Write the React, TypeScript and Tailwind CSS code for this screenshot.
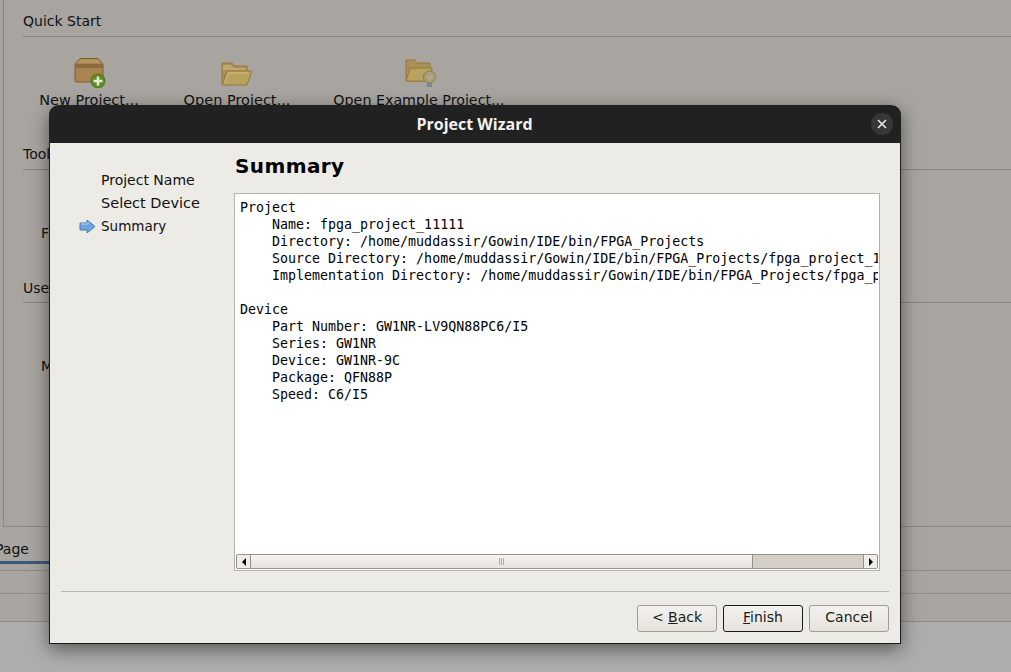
import { ReactNode } from "react";

function NewProjectIcon() {
  return (
    <svg className="mb-[4px] ml-[3px]" width="34" height="32" viewBox="0 0 34 32">
      <path d="M1 8 L6 2.5 H24 L29 8 V25 Q29 26 28 26 H2 Q1 26 1 25 Z" fill="#a98450" stroke="#7d5f35" />
      <rect x="1.5" y="8" width="27" height="4" fill="#8a6a3e" />
      <path d="M6 3.5 H24 L27 7 H3 Z" fill="#b8945f" />
      <circle cx="24" cy="25" r="7" fill="#5d8e1f" stroke="#4a7416" />
      <path d="M24 20.5 V29.5 M19.5 25 H28.5" stroke="#e6e6dc" strokeWidth="2.6" />
    </svg>
  );
}

function FolderIcon() {
  return (
    <svg className="mb-[5px]" width="32" height="26" viewBox="0 0 32 26">
      <path d="M1 23 V2 H11 L13 5 H26 V23 Z" fill="#a8925a" stroke="#9a7436" />
      <path d="M2 4 H10 L12 7 H25 V9 H2 Z" fill="#bfa76d" />
      <path d="M1 24 L6 10 H31 L26 24 Z" fill="#b8a25f" stroke="#9a7436" />
      <path d="M4 22 L7.5 12 H27" fill="none" stroke="#cdbb80" />
    </svg>
  );
}

function ExampleIcon() {
  return (
    <svg className="mb-[3px] ml-[4px]" width="32" height="30" viewBox="0 0 32 30">
      <path d="M1 22 V1 H10 L12 4 H25 V22 Z" fill="#a8925a" stroke="#9a7436" />
      <path d="M1 22 L5 9 H27 L26 22 Z" fill="#b8a25f" stroke="#9a7436" />
      <circle cx="24.5" cy="18" r="6" fill="#a99f80" stroke="#8e7a45" />
      <path d="M22 17 L24.5 20 L27 17" fill="none" stroke="#c9c2a8" />
      <rect x="22" y="24" width="5" height="4" fill="#7d8688" />
    </svg>
  );
}

function Launch({ icon, label, w, size }: { icon: ReactNode; label: string; w: string; size: string }) {
  return (
    <div className={`flex flex-col items-center ${w}`}>
      <div className="h-[38px] flex items-end">{icon}</div>
      <span className={`leading-[17px] whitespace-nowrap ${size}`}>{label}</span>
    </div>
  );
}

function DialogButton({ children, isDefault }: { children: ReactNode; isDefault?: boolean }) {
  return (
    <button
      className={`w-[80px] h-[27px] pb-[2px] rounded-[3px] border bg-gradient-to-b from-[#f3f1ed] to-[#e6e3dd] text-[#1c1c1c] text-[14px] ${
        isDefault ? "border-[#1a1a1a]" : "border-[#a09c95]"
      }`}
    >
      {children}
    </button>
  );
}

const summary = `Project
    Name: fpga_project_11111
    Directory: /home/muddassir/Gowin/IDE/bin/FPGA_Projects
    Source Directory: /home/muddassir/Gowin/IDE/bin/FPGA_Projects/fpga_project_11111/src
    Implementation Directory: /home/muddassir/Gowin/IDE/bin/FPGA_Projects/fpga_project_11111/impl

Device
    Part Number: GW1NR-LV9QN88PC6/I5
    Series: GW1NR
    Device: GW1NR-9C
    Package: QFN88P
    Speed: C6/I5`;

export default function App() {
  return (
    <div className="relative w-[1011px] h-[672px] overflow-hidden bg-[#adadad] font-['DejaVu_Sans',sans-serif] text-[14px] text-[#111]">
      {/* page behind the dialog */}
      <div className="h-[622px] bg-[#a8a5a1] border-b border-[#8b8985] flex flex-col">
        <div className="h-[527px] shrink-0 ml-[3px] border-l border-b border-[#8b8985] pl-[19px] pt-[13px] flex flex-col">
          <div className="leading-[17px]">Quick Start</div>
          <div className="h-px bg-[#85837f] mt-[6px]" />
          <div className="flex mt-[17px] ml-[5px]">
            <Launch icon={<NewProjectIcon />} label="New Project..." w="w-[122px]" size="text-[14.5px]" />
            <Launch icon={<FolderIcon />} label="Open Project..." w="w-[150px] ml-[12px]" size="text-[14.5px]" />
            <Launch icon={<ExampleIcon />} label="Open Example Project..." w="w-[170px] ml-[22px]" size="text-[14.25px]" />
          </div>
          <div className="leading-[17px] mt-[37px]">Tools</div>
          <div className="h-px bg-[#85837f] mt-[6px]" />
          <div className="leading-[17px] ml-[18px] mt-[55px]">F</div>
          <div className="leading-[17px] mt-[38px]">User</div>
          <div className="h-px bg-[#85837f] mt-[5px]" />
          <div className="leading-[17px] ml-[18px] mt-[55px]">M</div>
        </div>
        <div className="h-[44px] shrink-0 pt-[14px] leading-[17px] -ml-[5px] border-b border-[#8f8d89]">
          <span>Page</span>
          <div className="h-[3px] w-[60px] bg-[#3b5a78] ml-[5px] mt-[3px]" />
        </div>
        <div className="h-[23px] shrink-0 border-b border-[#908e8a]" />
      </div>

      {/* dialog */}
      <div className="absolute left-[49px] top-[105px] w-[852px] h-[539px] flex flex-col rounded-t-[10px] border border-[#1c1c1c] border-t-0 bg-[#edebe6] shadow-[0_5px_18px_rgba(0,0,0,0.5)]">
        <div className="relative h-[38px] shrink-0 -mx-px rounded-t-[10px] bg-[#212121] flex items-center justify-center">
          <span className="font-['Open_Sans',sans-serif] font-bold text-[16px] text-[#f2f1ef] -ml-[1px]">Project Wizard</span>
          <div className="absolute right-[8px] top-[8px] w-[22px] h-[22px] rounded-full bg-[#373737] flex items-center justify-center">
            <svg width="10" height="10" viewBox="0 0 10 10">
              <path d="M1 1 L9 9 M9 1 L1 9" stroke="#f0f0f0" strokeWidth="1.5" />
            </svg>
          </div>
        </div>

        <div className="flex flex-1 min-h-0">
          <div className="w-[184px] shrink-0 pt-[29px] pl-[29px]">
            <div className="leading-[17px] h-[23px] pl-[22px]">Project Name</div>
            <div className="leading-[17px] h-[23px] pl-[22px] text-[14.5px]">Select Device</div>
            <div className="leading-[17px] h-[23px] flex items-center gap-[5px] -mt-[3px] text-[13.5px]">
              <svg width="17" height="15" viewBox="0 0 17 15">
                <path d="M1 4 H8 V1 L16 7.5 L8 14 V11 H1 Z" fill="#6ea3e4" stroke="#4a78b4" />
                <path d="M2 5 H9 V3" fill="none" stroke="#b5d2f4" />
              </svg>
              <span>Summary</span>
            </div>
          </div>

          <div className="flex-1 min-w-0 pr-[20px] flex flex-col">
            <h1 className="font-bold text-[20px] leading-[24px] tracking-[0.4px] text-black mt-[11px] ml-[1px]">Summary</h1>
            <div className="mt-[15px] h-[378px] border border-[#b5b2aa] p-px bg-white flex flex-col">
              <pre className="flex-1 min-h-0 overflow-hidden pl-[4px] pt-[4px] font-['DejaVu_Sans_Mono',monospace] text-[13.3px] leading-[17px] text-black">
                {summary}
              </pre>
              <div className="h-[15px] flex border border-[#96928a] rounded-[2px] bg-[#d5cfc7]">
                <div className="w-[14px] border-r border-[#96928a] bg-[#efede9] flex items-center justify-center">
                  <div className="w-0 h-0 border-y-[4px] border-y-transparent border-r-[4px] border-r-black" />
                </div>
                <div className="w-[502px] border-r border-[#96928a] bg-gradient-to-b from-[#f5f4f1] to-[#e6e3de] flex items-center justify-center gap-px">
                  <span className="w-px h-[7px] bg-[#b3afa8]" />
                  <span className="w-px h-[7px] bg-[#b3afa8]" />
                  <span className="w-px h-[7px] bg-[#b3afa8]" />
                </div>
                <div className="flex-1" />
                <div className="w-[14px] border-l border-[#96928a] bg-[#efede9] flex items-center justify-center">
                  <div className="w-0 h-0 border-y-[4px] border-y-transparent border-l-[4px] border-l-black" />
                </div>
              </div>
            </div>
          </div>
        </div>

        <div className="h-[52px] shrink-0 mx-[11px] border-t border-t-[#bab7b0] flex items-start justify-end gap-[6px] pt-[13px]">
          <DialogButton>
            &lt; <u>B</u>ack
          </DialogButton>
          <DialogButton isDefault>
            <u>F</u>inish
          </DialogButton>
          <DialogButton>Cancel</DialogButton>
        </div>
      </div>
    </div>
  );
}
